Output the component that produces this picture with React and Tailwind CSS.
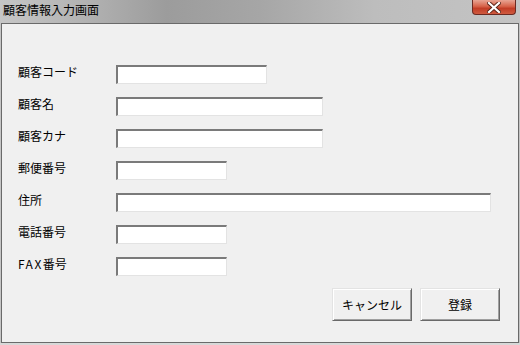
import React from 'react';

const font = { fontFamily: '"MS UI Gothic", "Noto Sans CJK JP", sans-serif' };

function Field({ label, width }) {
  return (
    <div className="flex items-start h-[19px]">
      <div className="w-[114px] pl-[16px] text-[12px] leading-[12px] pt-[1px] text-black whitespace-nowrap">
        {label}
      </div>
      <div
        className={`${width} h-[19px] bg-white border-t-2 border-l-2 border-t-[#7a7a7a] border-l-[#7a7a7a] border-b border-r border-b-[#e3e3e3] border-r-[#e3e3e3]`}
      />
    </div>
  );
}

function WinButton({ children }) {
  return (
    <button className="w-[80px] h-[33px] bg-[#f0f0f0] text-[12px] text-black border border-t-[#e3e3e3] border-l-[#e3e3e3] border-r-[#696969] border-b-[#696969] shadow-[inset_1px_1px_0_#ffffff,inset_-1px_-1px_0_#a0a0a0]">
      {children}
    </button>
  );
}

export default function App() {
  return (
    <div
      className="w-[520px] h-[345px] overflow-hidden flex flex-col bg-[linear-gradient(90deg,#c6c6c6_0%,#b0b0b0_18%,#9c9c9c_32%,#a6a6a6_50%,#bdbdbd_72%,#c4c4c4_100%)]"
      style={font}
    >
      {/* title bar */}
      <div className="h-[23px] flex justify-between items-start shrink-0">
        <div className="pl-[3px] pt-[3px] text-[12px] leading-[13px] text-black">顧客情報入力画面</div>
        <div className="mr-[4px] w-[44px] h-[15px] rounded-b-[4px] border border-t-0 border-[#6b2a22] bg-[linear-gradient(180deg,#e8a493_0%,#d7634a_45%,#c23d26_60%,#cf5a3f_100%)] flex items-center justify-center">
          <svg width="14" height="11" viewBox="0 0 14 11">
            <path d="M2 1 L12 10 M12 1 L2 10" stroke="#5a2418" strokeWidth="4" strokeLinecap="square" />
            <path d="M2 1 L12 10 M12 1 L2 10" stroke="#ffffff" strokeWidth="2.2" strokeLinecap="square" />
          </svg>
        </div>
      </div>

      {/* client area */}
      <div className="mx-[1px] h-[320px] border border-[#6a6a6a] bg-[#f0f0f0] flex flex-col pt-[41px]">
        <div className="flex flex-col gap-[13px]">
          <Field label="顧客コード" width="w-[151px]" />
          <Field label="顧客名" width="w-[207px]" />
          <Field label="顧客カナ" width="w-[207px]" />
          <Field label="郵便番号" width="w-[111px]" />
          <Field label="住所" width="w-[375px]" />
          <Field label="電話番号" width="w-[111px]" />
          <Field label={<><span className="tracking-[1.5px]">FAX</span>番号</>} width="w-[111px]" />
        </div>
        <div className="flex justify-end gap-[8px] pr-[18px] mt-[12px]">
          <WinButton>キャンセル</WinButton>
          <WinButton>登録</WinButton>
        </div>
      </div>
      <div className="flex-1 bg-[#d8d8d8]" />
    </div>
  );
}
